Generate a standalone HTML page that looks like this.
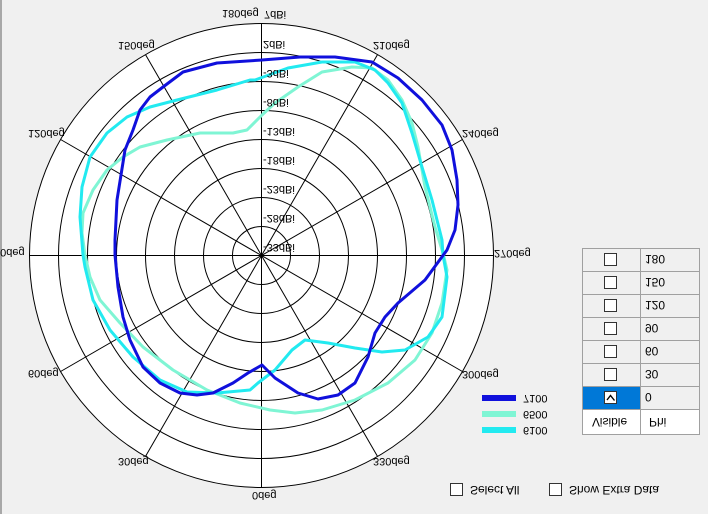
<!DOCTYPE html>
<html><head><meta charset="utf-8"><style>
html,body{margin:0;padding:0;width:708px;height:514px;overflow:hidden;background:#f0f0f0}
svg{display:block}
text{font-family:"Liberation Sans",sans-serif;fill:#000}
</style></head><body>
<svg width="708" height="514" viewBox="0 0 708 514" xmlns="http://www.w3.org/2000/svg">
<rect x="0" y="0" width="708" height="514" fill="#f0f0f0"/>
<rect x="0" y="0" width="2" height="514" fill="#a8a8a8"/>
<circle cx="261.5" cy="255.5" r="232" fill="#fff"/>
<g fill="none" stroke="#000" stroke-width="1">
<circle cx="261.5" cy="255.5" r="232"/>
<circle cx="261.5" cy="255.5" r="203"/>
<circle cx="261.5" cy="255.5" r="174"/>
<circle cx="261.5" cy="255.5" r="145"/>
<circle cx="261.5" cy="255.5" r="116"/>
<circle cx="261.5" cy="255.5" r="87"/>
<circle cx="261.5" cy="255.5" r="58"/>
<circle cx="261.5" cy="255.5" r="29"/>
<line x1="261.5" y1="23.5" x2="261.5" y2="487.5"/>
<line x1="29.5" y1="255.5" x2="493.5" y2="255.5"/>
<line x1="145.5" y1="456.4" x2="377.5" y2="54.6"/>
<line x1="377.5" y1="456.4" x2="145.5" y2="54.6"/>
<line x1="60.6" y1="371.5" x2="462.4" y2="139.5"/>
<line x1="462.4" y1="371.5" x2="60.6" y2="139.5"/>
</g>
<g fill="none" stroke-width="3" stroke-linejoin="round" stroke-linecap="round">
<polyline stroke="#7ff5d4" points="262,115 247,130 233,133 200,133 167,140 140,147 123,157 107,170 93,190 83,213 82,233 85,255 90,277 100,300 120,323 143,347 173,370 207,390 240,403 270,410 295,413 322,410 355,400 388,383 415,360 432,333 442,303 447,270 443,253 435,227 425,187 418,147 412,123 402,100 388,80 372,68 352,67 322,72 298,87 275,103 262,115"/>
<polyline stroke="#22eaf0" points="255,80 288,68 322,62 355,62 375,70 388,83 402,103 412,133 422,167 432,200 442,240 443,255 447,277 442,317 428,337 405,350 382,352 355,348 328,343 305,340 292,350 275,370 258,383 250,390 217,393 187,392 160,380 133,357 110,330 93,300 85,267 83,255 80,217 82,187 90,157 107,133 127,117 150,107 177,100 217,90 250,80 255,80"/>
<polyline stroke="#1010dc" points="262,60 300,57 335,57 372,62 398,78 422,100 442,125 452,150 457,180 458,205 455,230 447,250 425,280 398,303 385,317 375,333 368,357 355,383 338,395 318,399 298,393 275,378 262,365 248,373 233,383 213,393 197,395 180,393 160,383 143,367 130,340 123,317 118,287 115,255 115,240 117,200 125,150 133,130 140,110 150,97 163,87 183,72 217,63 262,60"/>
</g>
<g font-size="11">
<text transform="matrix(1,0,0,-1,222,10)">180deg</text>
<text transform="matrix(1,0,0,-1,264,11)">7dBi</text>
<text transform="matrix(1,0,0,-1,118,42)">150deg</text>
<text transform="matrix(1,0,0,-1,373,42)">210deg</text>
<text transform="matrix(1,0,0,-1,28,130)">120deg</text>
<text transform="matrix(1,0,0,-1,462,130)">240deg</text>
<text transform="matrix(1,0,0,-1,-6,249)">90deg</text>
<text transform="matrix(1,0,0,-1,494,250)">270deg</text>
<text transform="matrix(1,0,0,-1,28,370)">60deg</text>
<text transform="matrix(1,0,0,-1,462,371)">300deg</text>
<text transform="matrix(1,0,0,-1,118,458)">30deg</text>
<text transform="matrix(1,0,0,-1,373,458)">330deg</text>
<text transform="matrix(1,0,0,-1,252,492)">0deg</text>
<text transform="matrix(1,0,0,-1,263,41)">2dBi</text>
<text transform="matrix(1,0,0,-1,263,70)">-3dBi</text>
<text transform="matrix(1,0,0,-1,263,99)">-8dBi</text>
<text transform="matrix(1,0,0,-1,263,128)">-13dBi</text>
<text transform="matrix(1,0,0,-1,263,157)">-18dBi</text>
<text transform="matrix(1,0,0,-1,263,186)">-23dBi</text>
<text transform="matrix(1,0,0,-1,263,215)">-28dBi</text>
<text transform="matrix(1,0,0,-1,263,244)">-33dBi</text>
</g>
<rect x="482" y="395" width="34" height="6" fill="#1010dc"/>
<rect x="482" y="411" width="34" height="6" fill="#7ff5d4"/>
<rect x="482" y="427" width="34" height="6" fill="#22eaf0"/>
<g font-size="11">
<text transform="matrix(1,0,0,-1,523,395)">7100</text>
<text transform="matrix(1,0,0,-1,523,411)">6500</text>
<text transform="matrix(1,0,0,-1,523,427)">6100</text>
</g>
<!-- table -->
<rect x="582" y="248" width="118" height="161" fill="#f0f0f0"/>
<rect x="582" y="409" width="118" height="26" fill="#fff"/>
<rect x="582" y="386" width="58" height="23" fill="#0078d7"/>
<g stroke="#a0a0a0" stroke-width="1" fill="none">
<rect x="582.5" y="248.5" width="117" height="186"/>
<line x1="640.5" y1="248" x2="640.5" y2="435"/>
<line x1="582" y1="271.5" x2="700" y2="271.5"/>
<line x1="582" y1="294.5" x2="700" y2="294.5"/>
<line x1="582" y1="317.5" x2="700" y2="317.5"/>
<line x1="582" y1="340.5" x2="700" y2="340.5"/>
<line x1="582" y1="363.5" x2="700" y2="363.5"/>
<line x1="582" y1="386.5" x2="700" y2="386.5"/>
<line x1="582" y1="409.5" x2="700" y2="409.5"/>
</g>
<g fill="#fff" stroke="#333" stroke-width="1">
<rect x="604.5" y="253.5" width="12" height="12"/>
<rect x="604.5" y="276.5" width="12" height="12"/>
<rect x="604.5" y="299.5" width="12" height="12"/>
<rect x="604.5" y="322.5" width="12" height="12"/>
<rect x="604.5" y="345.5" width="12" height="12"/>
<rect x="604.5" y="368.5" width="12" height="12"/>
<rect x="604.5" y="391.5" width="12" height="12"/>
<rect x="450.5" y="483.5" width="12" height="12"/>
<rect x="549.5" y="483.5" width="12" height="12"/>
</g>
<polyline points="607,400 610.5,395.5 614.5,400.5" fill="none" stroke="#000" stroke-width="1.4"/>
<g font-size="12">
<text transform="matrix(1,0,0,-1,645,255)">180</text>
<text transform="matrix(1,0,0,-1,645,278)">150</text>
<text transform="matrix(1,0,0,-1,645,301)">120</text>
<text transform="matrix(1,0,0,-1,645,324)">90</text>
<text transform="matrix(1,0,0,-1,645,347)">60</text>
<text transform="matrix(1,0,0,-1,645,370)">30</text>
<text transform="matrix(1,0,0,-1,645,393)">0</text>
<text transform="matrix(1,0,0,-1,592,418)">Visible</text>
<text transform="matrix(1,0,0,-1,649,418)">Phi</text>
<text transform="matrix(1,0,0,-1,470,486)">Select All</text>
<text transform="matrix(1,0,0,-1,569,486)">Show Extra Data</text>
</g>
</svg>
</body></html>
